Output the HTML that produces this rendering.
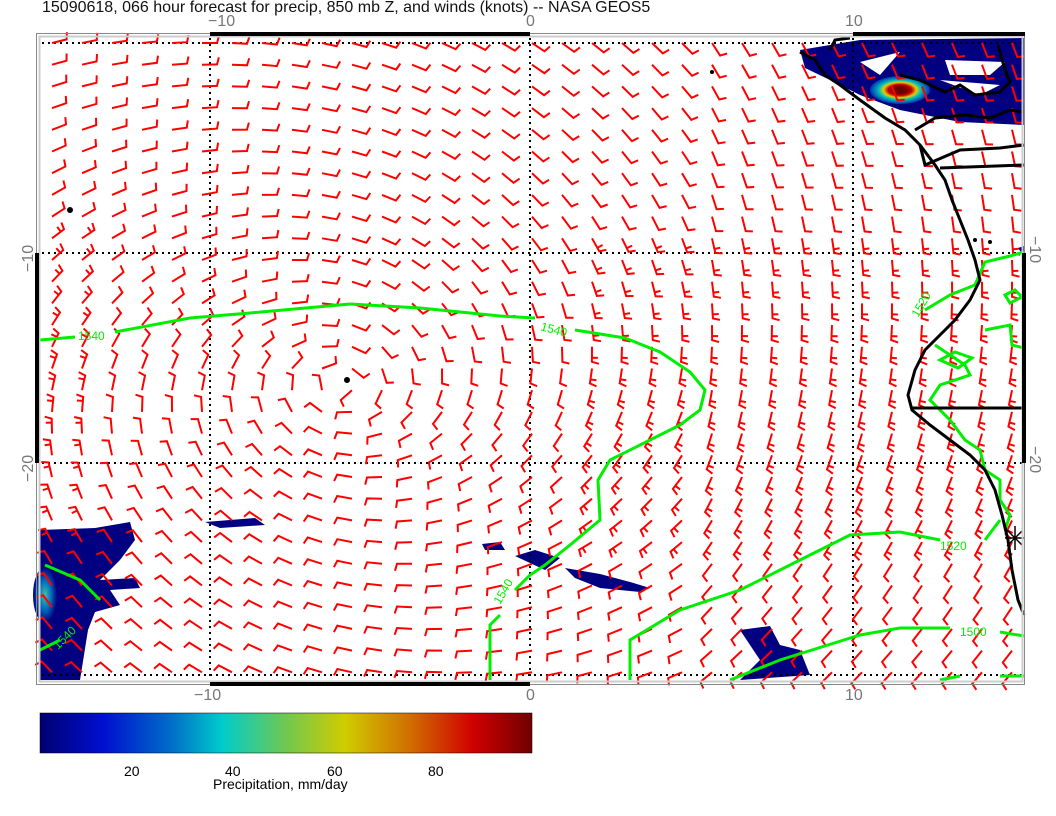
<!DOCTYPE html>
<html><head><meta charset="utf-8"><style>
html,body{margin:0;padding:0;background:#fff;width:1056px;height:816px;overflow:hidden}
svg{display:block}
text{font-family:"Liberation Sans",sans-serif}
</style></head><body>
<svg id="s" width="1056" height="816" xmlns="http://www.w3.org/2000/svg">
<defs>
<linearGradient id="cb" x1="0" x2="1">
<stop offset="0" stop-color="#000070"/><stop offset="0.13" stop-color="#0010d0"/>
<stop offset="0.27" stop-color="#0070c8"/><stop offset="0.37" stop-color="#00cccc"/>
<stop offset="0.5" stop-color="#70c850"/><stop offset="0.62" stop-color="#d0cc00"/>
<stop offset="0.75" stop-color="#d07000"/><stop offset="0.88" stop-color="#d00000"/>
<stop offset="1" stop-color="#700000"/></linearGradient>
<radialGradient id="hot"><stop offset="0.25" stop-color="#700000"/><stop offset="0.4" stop-color="#d00000"/><stop offset="0.55" stop-color="#e0d000"/><stop offset="0.7" stop-color="#00c0c0"/><stop offset="1" stop-color="#0030b0"/></radialGradient>
<radialGradient id="hot2"><stop offset="0" stop-color="#40c0a0"/><stop offset="0.5" stop-color="#0070c0"/><stop offset="1" stop-color="#000080"/></radialGradient>
</defs>
<text x="42" y="12" font-size="16" fill="#111">15090618, 066 hour forecast for precip, 850 mb Z, and winds (knots) -- NASA GEOS5</text>
<!-- precip -->
<g fill="#000080">
<path d="M800 50 L860 40 L1024 38 L1024 125 L960 122 L900 110 L860 95 L830 80 L805 68 Z"/>
<path d="M40 530 L95 528 L130 522 L135 540 L120 560 L100 580 L135 578 L140 588 L110 590 L120 605 L95 612 L88 630 L80 680 L40 680 Z"/>
<path d="M205 522 L255 518 L265 525 L220 528 Z"/>
<path d="M482 544 L500 542 L505 550 L485 550 Z"/>
<path d="M515 556 L535 550 L560 558 L545 570 Z"/>
<path d="M565 568 L600 574 L630 582 L650 588 L640 592 L600 588 L575 578 Z"/>
<path d="M740 630 L770 626 L780 645 L800 650 L810 675 L740 680 L760 660 Z"/>
<path d="M1018 248 L1024 246 L1024 256 Z"/>
</g>
<ellipse cx="900" cy="90" rx="30" ry="14" fill="url(#hot)"/>
<ellipse cx="45" cy="595" rx="12" ry="28" fill="url(#hot2)"/>
<g fill="#fff"><path d="M860 62 L900 52 L880 75 Z"/><path d="M945 60 L1005 62 L990 75 L950 75 Z"/><path d="M940 80 L1000 85 L980 95 Z"/></g>
<!-- grid -->
<g stroke="#000" stroke-width="2" stroke-dasharray="2 4" fill="none">
<line x1="42" y1="43" x2="1022" y2="43"/><line x1="42" y1="253" x2="1022" y2="253"/>
<line x1="42" y1="463" x2="1022" y2="463"/><line x1="42" y1="675" x2="1022" y2="675"/>
<line x1="210" y1="38" x2="210" y2="680"/><line x1="530" y1="38" x2="530" y2="680"/><line x1="853" y1="38" x2="853" y2="680"/>
</g>
<g id="barbs" stroke="#f00" stroke-width="2" fill="none"></g>
<!-- contours -->
<g stroke="#00ee00" stroke-width="3" fill="none">
<path d="M40 340 L75 337 M115 332 L190 318 L250 313 L350 304 L420 308 L500 316 L535 318 M575 330 L625 338 L660 352 L690 372 L705 390 L700 410 L680 425 L640 445 L610 460 L598 480 L600 520 L570 545 L545 565 L530 575 L515 590 M500 615 L490 625 L490 680"/>
<path d="M630 680 L630 640 L680 610 L740 590 L790 565 L850 535 L900 532 L940 540 M985 540 L1000 520"/>
<path d="M730 680 L780 660 L860 635 L900 628 L950 628 M1000 632 L1024 636"/>
<path d="M940 680 L960 676 M1000 676 L1024 676"/>
<path d="M925 310 L950 295 L975 285 L985 262 L1010 256 L1024 252 M1005 295 L1015 290 L1022 297 L1010 303 Z M985 330 L1010 325 L1012 345 L1024 348 M940 360 L955 352 L972 358 L958 368 Z M935 345 L965 365 L970 375 L940 385 L930 400 L950 420 L965 440 L980 450 L985 470 L1000 480 L1000 500 L1010 515 L1005 530"/>
<path d="M40 650 L60 640 M100 600 L80 580 L45 565"/>
</g>
<g fill="#00ee00" font-size="12"><text x="78" y="340">1540</text><text x="540" y="330" transform="rotate(15 540 330)">1540</text><text x="500" y="605" transform="rotate(-60 500 605)">1540</text><text x="940" y="550">1520</text><text x="960" y="636">1500</text><text x="918" y="318" transform="rotate(-60 918 318)">1520</text><text x="58" y="650" transform="rotate(-45 58 650)">1540</text></g>
<!-- coast -->
<g stroke="#000" stroke-width="3" fill="none">
<path d="M800 52 L815 60 L825 75 L840 85 L860 100 L885 118 L905 130 L920 145 L935 165 L945 180 L952 200 L962 225 L968 240 L975 260 L980 280 L970 300 L955 320 L940 335 L925 350 L915 370 L908 395 L912 410 L930 425 L950 440 L970 455 L985 470 L995 490 L1002 515 L1008 540 L1012 570 L1018 600 L1024 615"/>
<path d="M830 50 L835 40 L850 38 M900 75 L920 80 L945 92 L960 85 L975 95 L1000 92 L1010 82 L1005 70 L998 45"/>
<path d="M915 130 L935 118 L965 115 L990 118 L1010 110 L1024 112"/>
<path d="M920 145 L925 165 L960 150 L1000 148 L1024 145 M940 168 L1024 165"/>
<path d="M912 408 L1024 408"/>
</g>
<g fill="#000"><circle cx="70" cy="210" r="3"/><circle cx="347" cy="380" r="3"/><circle cx="712" cy="72" r="2"/><circle cx="975" cy="240" r="2"/><circle cx="990" cy="242" r="2"/></g>
<g stroke="#000" stroke-width="1.5"><line x1="1005" y1="538" x2="1025" y2="538"/><line x1="1015" y1="526" x2="1015" y2="550"/><line x1="1007" y1="530" x2="1023" y2="546"/><line x1="1023" y1="530" x2="1007" y2="546"/></g>
<!-- frame -->
<rect x="36.5" y="33.5" width="988" height="651" fill="none" stroke="#888" stroke-width="1"/>
<rect x="39.5" y="36.5" width="983" height="645" fill="none" stroke="#ccc" stroke-width="2"/>
<g fill="#000"><rect x="210" y="32" width="320" height="4"/><rect x="853" y="32" width="172" height="4"/><rect x="210" y="682" width="320" height="4"/><rect x="35" y="253" width="4" height="210"/><rect x="1022" y="253" width="4" height="210"/><rect x="35" y="36" width="1" height="0"/></g>
<g fill="#777" font-size="16">
<text x="208" y="26">−10</text><text x="526" y="26">0</text><text x="845" y="26">10</text>
<text x="194" y="700">−10</text><text x="526" y="700">0</text><text x="845" y="700">10</text>
<text transform="translate(33 272) rotate(-90)">−10</text><text transform="translate(33 482) rotate(-90)">−20</text>
<text transform="translate(1030 236) rotate(90)">−10</text><text transform="translate(1030 446) rotate(90)">−20</text>
</g>
<rect x="40" y="713" width="492" height="40" fill="url(#cb)" stroke="#000" stroke-width="0.5"/>
<g font-size="14" fill="#000"><text x="124" y="776">20</text><text x="225" y="776">40</text><text x="327" y="776">60</text><text x="428" y="776">80</text><text x="213" y="789">Precipitation, mm/day</text></g>
</svg>
<script>
var g=document.getElementById('barbs'),h='';
var cx=340,cy=385;
for(var r=0;r<30;r++)for(var c=0;c<33;c++){
 var x=52+c*30,y=43+r*21.7;
 var dx=(x-cx),dy=(y-cy)*1.6;
 var u=dy,v=-dx;
 u+=0.25*dx; v+=0.25*dy;
 if(x>700){v-=200;}
 var L=Math.hypot(u,v)||1;u/=L;v/=L;
 var ex=x-u*15,ey=y-v*15;
 var px=-v,py=u;
 var bx=ex+px*7-u*2,by=ey+py*7-v*2;
 h+='<path d="M'+x.toFixed(1)+' '+y.toFixed(1)+'L'+ex.toFixed(1)+' '+ey.toFixed(1)+'L'+bx.toFixed(1)+' '+by.toFixed(1)+'"/>';
 if(Math.abs(dx)>250&&r>8&&r<24){var e2x=ex+u*4,e2y=ey+v*4;h+='<path d="M'+e2x.toFixed(1)+' '+e2y.toFixed(1)+'L'+(e2x+px*6).toFixed(1)+' '+(e2y+py*6).toFixed(1)+'"/>';}
}
g.innerHTML=h;
</script>
</body></html>
